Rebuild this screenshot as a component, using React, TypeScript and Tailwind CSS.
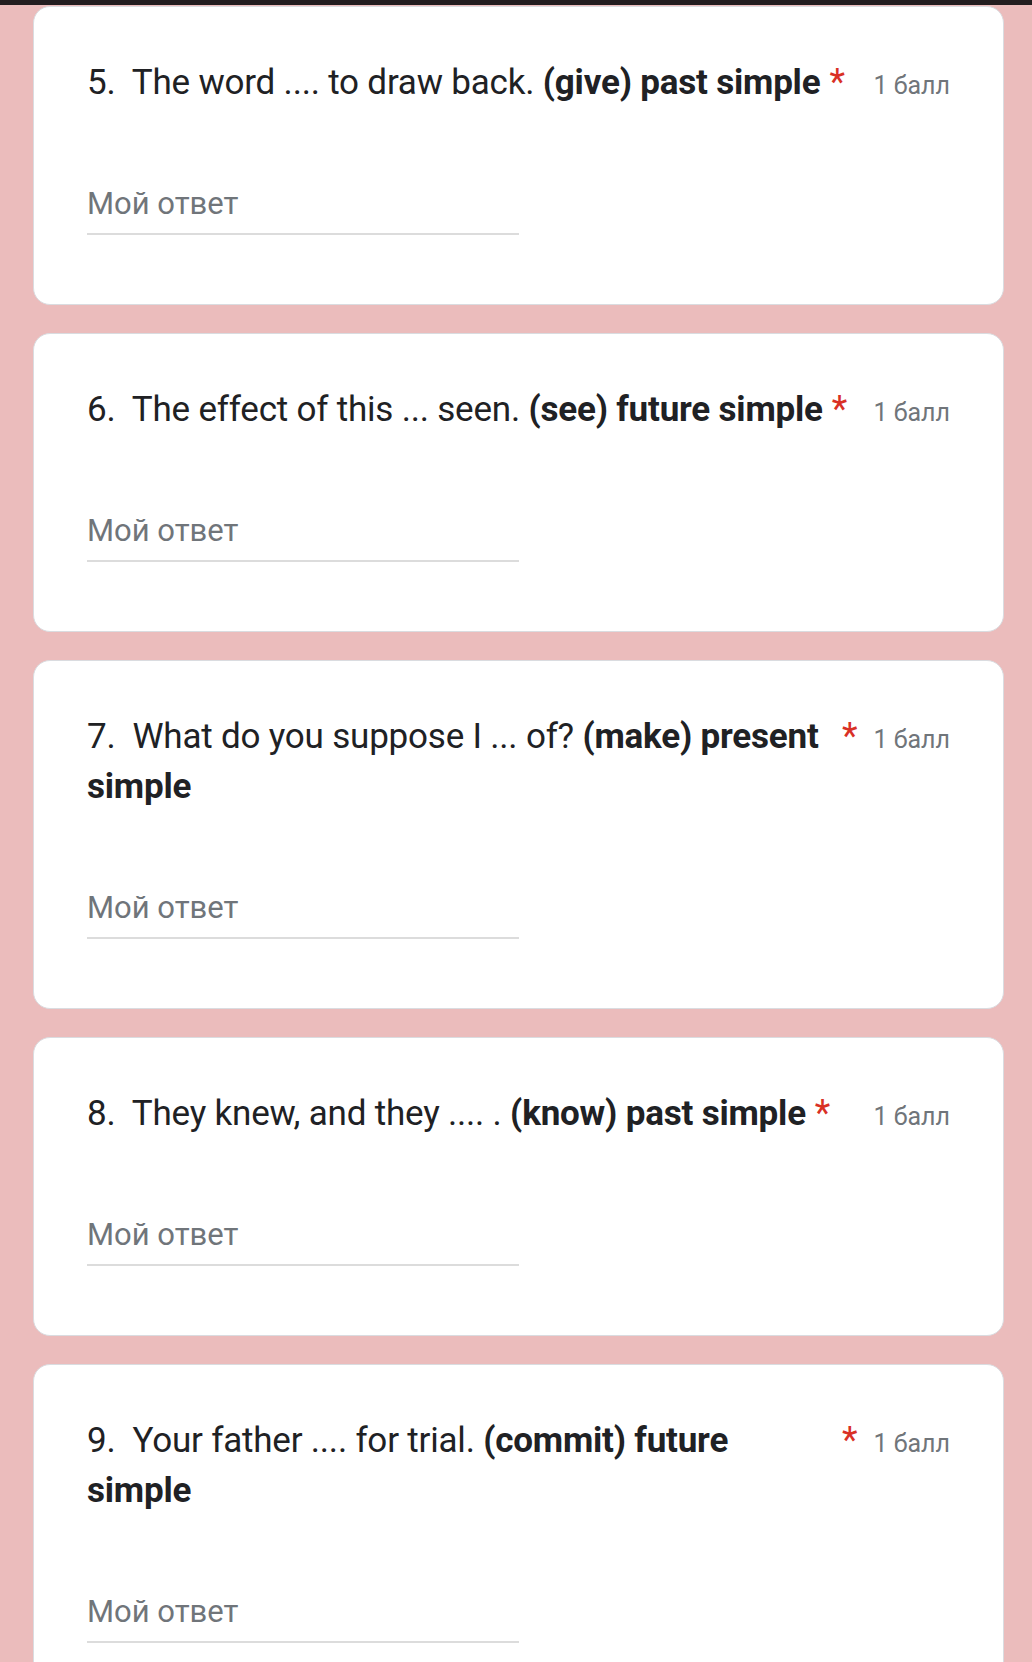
import React from "react";

type Q = { num: string; text: string; bold: string };

const questions: Q[] = [
  { num: "5.", text: "The word .... to draw back.", bold: "(give) past simple" },
  { num: "6.", text: "The effect of this ... seen.", bold: "(see) future simple" },
  { num: "7.", text: "What do you suppose I ... of?", bold: "(make) present simple" },
  { num: "8.", text: "They knew, and they .... .", bold: "(know) past simple" },
  { num: "9.", text: "Your father .... for trial.", bold: "(commit) future simple" },
];

function Card({ q }: { q: Q }) {
  return (
    <div className="ml-[33px] w-[971px] shrink-0 rounded-[17px] border border-[#dadce0] bg-white pl-[53px] pr-[53px] pt-[51px] pb-[69px]">
      <div className="flex items-baseline">
        <div className="min-w-0 max-w-[746px] text-[35px] leading-[50px] tracking-[-0.2px] text-[#202124]">
          {`${q.num}\u00a0 ${q.text} `}
          <span className="font-bold">{q.bold}</span>
        </div>
        <span className="shrink-0 pl-[9px] text-[36px] leading-[48px] text-[#d93025]">*</span>
        <span className="ml-auto shrink-0 pl-[12px] text-[25px] leading-[40px] text-[#70757a]">1 балл</span>
      </div>
      <div className="mt-[78px] w-[432px] border-b-2 border-[#dcdcdc] pb-[11px] text-[31px] leading-[36px] text-[#70757a]">
        Мой ответ
      </div>
    </div>
  );
}

export default function App() {
  return (
    <div
      className="h-[1662px] w-full overflow-hidden bg-[#ebbcbc]"
      style={{ fontFamily: "Roboto, 'Noto Sans', sans-serif" }}
    >
      <div className="h-[5px] w-full bg-[#231d1f]" />
      <div className="flex flex-col gap-[28px] pt-[1px]">
        {questions.map((q) => (
          <Card key={q.num} q={q} />
        ))}
      </div>
    </div>
  );
}
